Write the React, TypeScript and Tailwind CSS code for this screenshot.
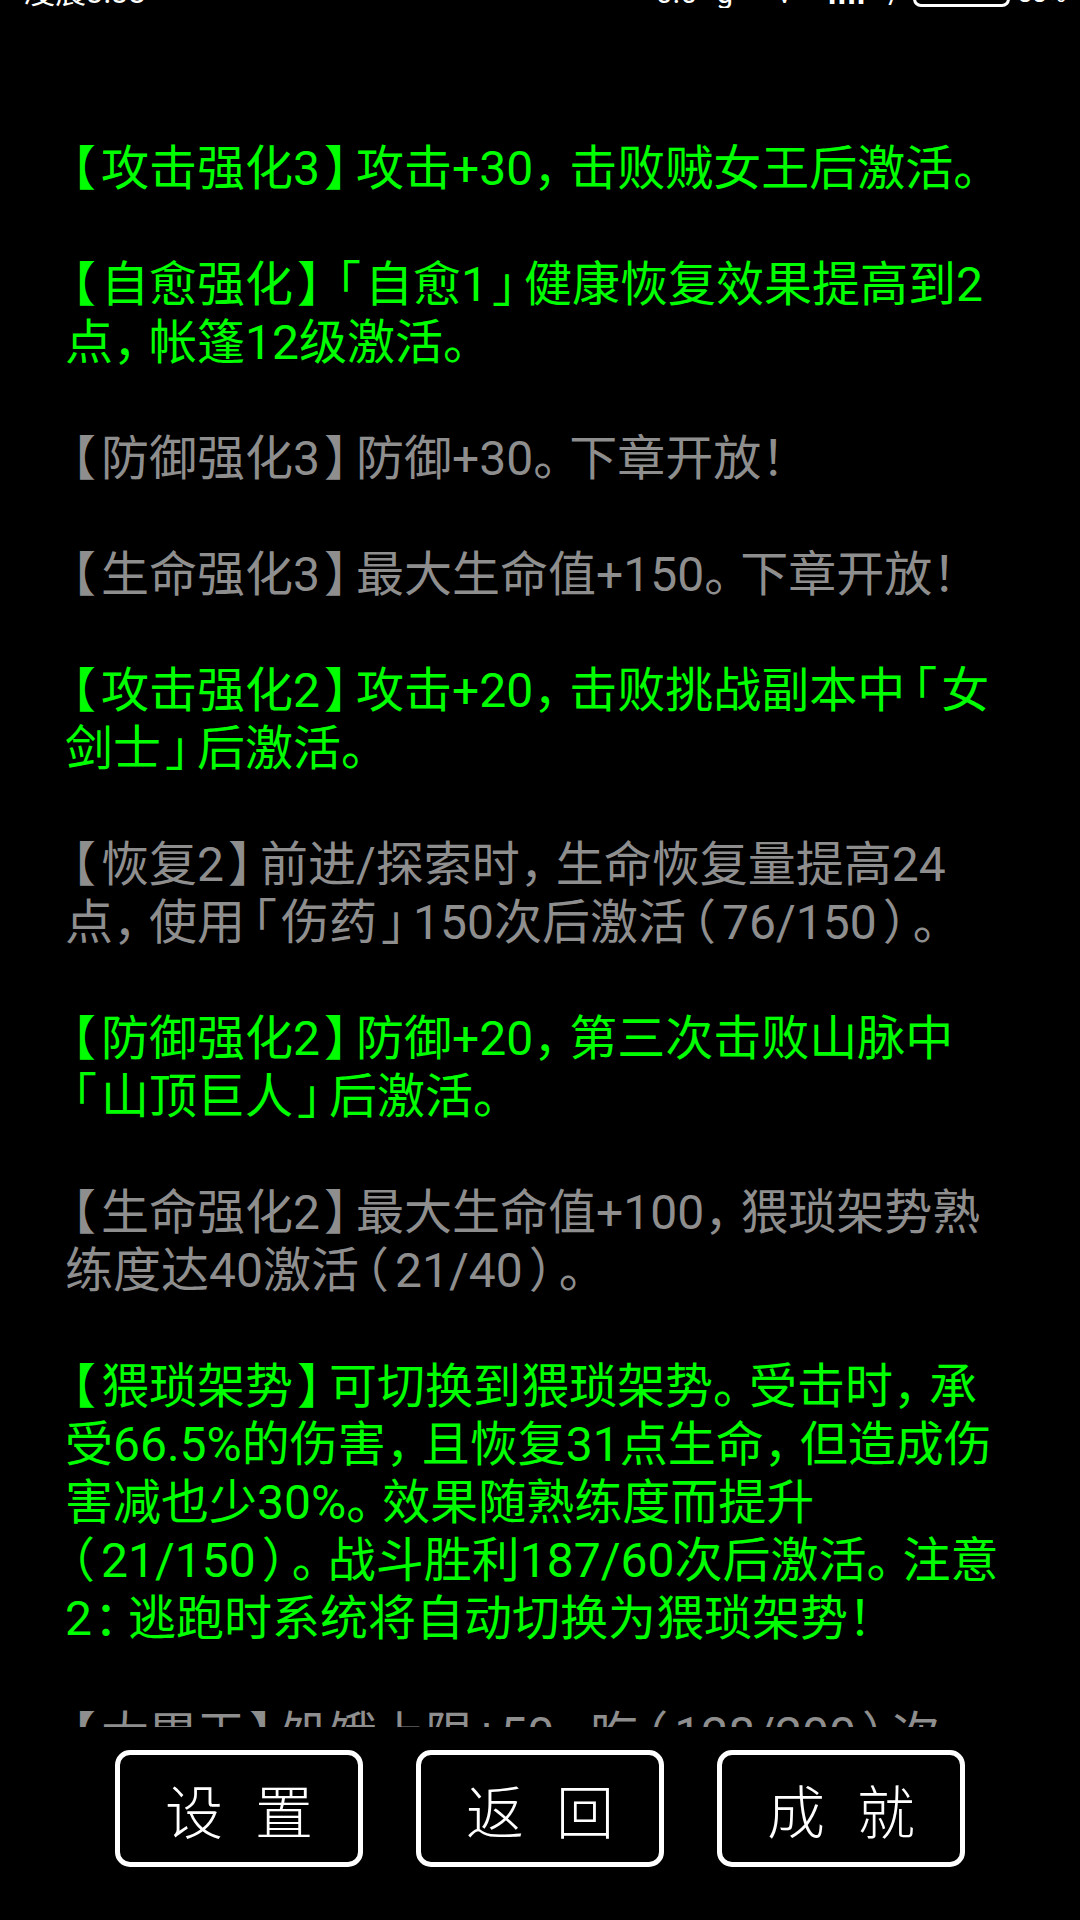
import React from "react";

const PAD: Record<string, string> = {
  "【": "[font-feature-settings:'halt'] pl-[7px] pr-[5px]",
  "】": "[font-feature-settings:'halt'] pl-[4px] pr-[8px]",
  "「": "[font-feature-settings:'halt'] pl-[8px] pr-[4px]",
  "」": "[font-feature-settings:'halt'] pl-[4px] pr-[8px]",
  "（": "[font-feature-settings:'halt'] pl-[6px] pr-[6px]",
  "）": "[font-feature-settings:'halt'] pl-[6px] pr-[6px]",
  "，": "[font-feature-settings:'halt'] pr-[12px]",
  "。": "[font-feature-settings:'halt'] pr-[12px]",
  "：": "[font-feature-settings:'halt'] pl-[2px] pr-[10px]",
  "！": "[font-feature-settings:'halt'] pr-[12px]",
};

function Line({ text }: { text: string }) {
  const parts = text.split(/([【】「」，。（）：！])/).filter((p) => p.length > 0);
  return (
    <div className="whitespace-nowrap">
      {parts.map((p, i) =>
        PAD[p] ? (
          <span key={i} className={PAD[p]}>
            {p}
          </span>
        ) : (
          <span key={i}>{p}</span>
        )
      )}
    </div>
  );
}

type Para = { green: boolean; lines: string[] };

const paras: Para[] = [
  { green: true, lines: ["【攻击强化3】攻击+30，击败贼女王后激活。"] },
  { green: true, lines: ["【自愈强化】「自愈1」健康恢复效果提高到2", "点，帐篷12级激活。"] },
  { green: false, lines: ["【防御强化3】防御+30。下章开放！"] },
  { green: false, lines: ["【生命强化3】最大生命值+150。下章开放！"] },
  { green: true, lines: ["【攻击强化2】攻击+20，击败挑战副本中「女", "剑士」后激活。"] },
  { green: false, lines: ["【恢复2】前进/探索时，生命恢复量提高24", "点，使用「伤药」150次后激活（76/150）。"] },
  { green: true, lines: ["【防御强化2】防御+20，第三次击败山脉中", "「山顶巨人」后激活。"] },
  { green: false, lines: ["【生命强化2】最大生命值+100，猥琐架势熟", "练度达40激活（21/40）。"] },
  {
    green: true,
    lines: [
      "【猥琐架势】可切换到猥琐架势。受击时，承",
      "受66.5%的伤害，且恢复31点生命，但造成伤",
      "害减也少30%。效果随熟练度而提升",
      "（21/150）。战斗胜利187/60次后激活。注意",
      "2：逃跑时系统将自动切换为猥琐架势！",
    ],
  },
  { green: false, lines: ["【大胃王】饥饿上限+50，吃（128/200）次"] },
];

function StatusBar() {
  return (
    <div className="h-[8px] overflow-hidden shrink-0">
      <div className="h-[40px] -mt-[27px] flex items-end justify-between pl-[24px] pr-[14px] text-white text-[31px] leading-[40px] font-['Roboto','Noto_Sans_CJK_SC',sans-serif]">
        <span>凌晨3:38</span>
        <div className="flex items-end">
          <span className="text-[30px]">0.0</span>
          <span className="ml-[19px] text-[30px]">g</span>
          <span className="ml-[44px] text-[30px]">v</span>
          <span className="ml-[36px] text-[32px] tracking-[1px] font-bold">ıııl</span>
          <span className="ml-[22px] text-[30px]">/</span>
          <div className="ml-[12px] w-[97px] h-[30px] border-[3px] border-white rounded-[8px] mb-[6px]" />
          <span className="ml-[8px] text-[26px]">88%</span>
        </div>
      </div>
    </div>
  );
}

function Btn({ a, b }: { a: string; b: string }) {
  return (
    <div className="w-[248px] h-[117px] border-[5px] border-white rounded-[15px] flex items-center justify-center gap-[32px] text-white text-[58px] leading-none font-['Noto_Sans_CJK_SC',sans-serif] font-light">
      <span>{a}</span>
      <span>{b}</span>
    </div>
  );
}

export default function App() {
  return (
    <div className="w-full h-[1920px] bg-black flex flex-col overflow-hidden">
      <StatusBar />
      <div className="h-[1719px] shrink-0 overflow-hidden pt-[132px] pl-[65px] [text-spacing-trim:space-all] text-[48px] leading-[58px] font-['Roboto','Noto_Sans_CJK_SC',sans-serif]">
        <div className="flex flex-col gap-[58px]">
          {paras.map((p, i) => (
            <div key={i} className={p.green ? "text-[#00ff00]" : "text-[#8e8e8e]"}>
              {p.lines.map((l, j) => (
                <Line key={j} text={l} />
              ))}
            </div>
          ))}
        </div>
      </div>
      <div className="mt-[23px] flex justify-center gap-[53px]">
        <Btn a="设" b="置" />
        <Btn a="返" b="回" />
        <Btn a="成" b="就" />
      </div>
    </div>
  );
}
